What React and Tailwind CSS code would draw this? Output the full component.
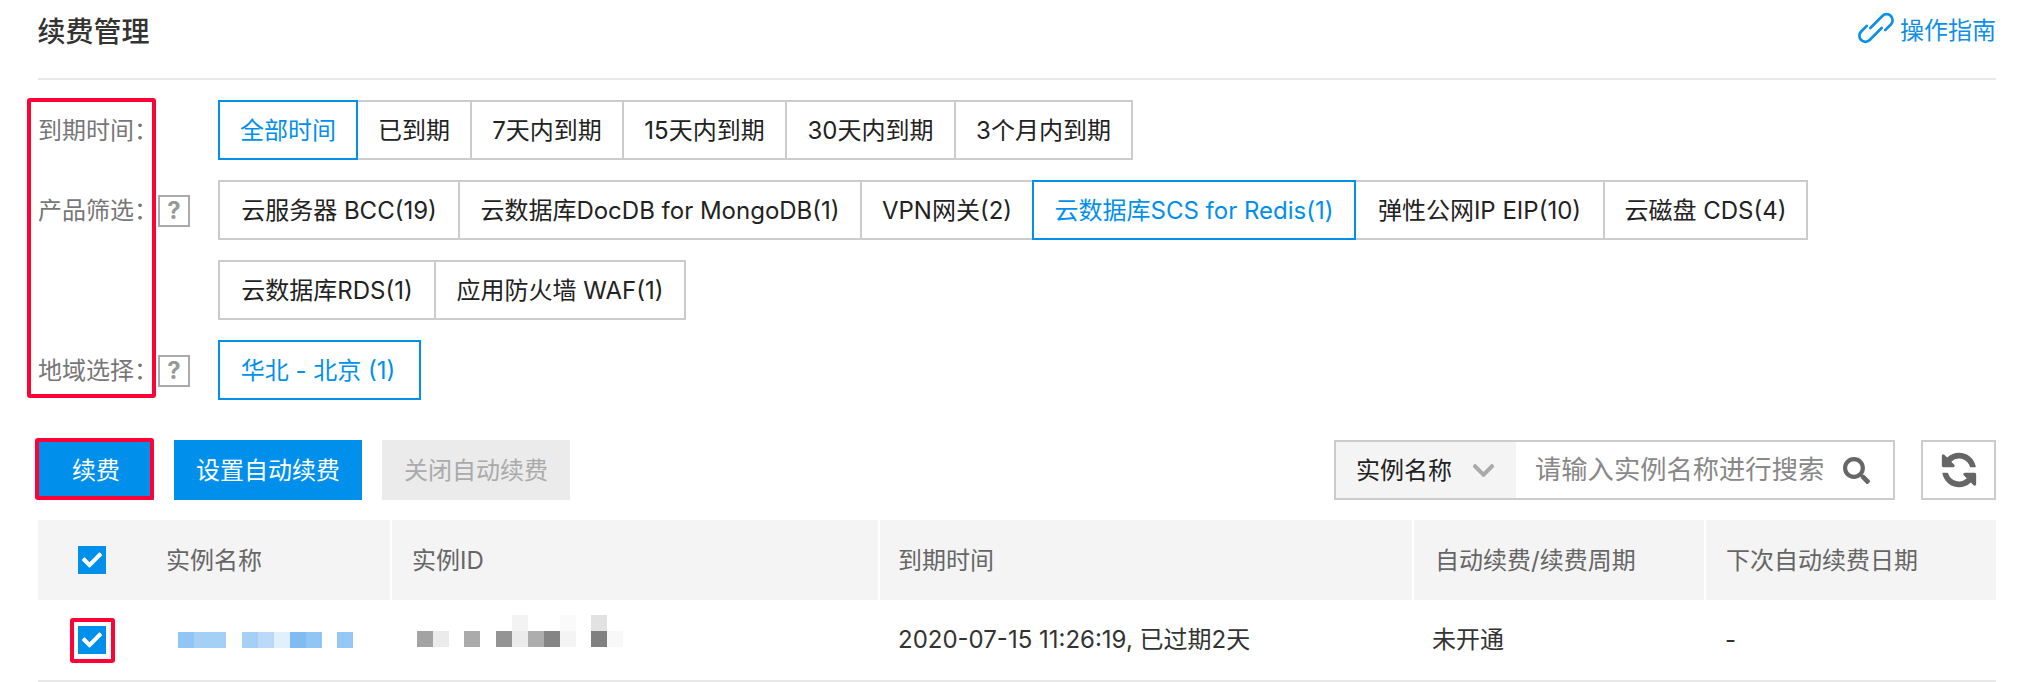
import React from "react";
import { FaSearch, FaChevronDown, FaCheck } from "react-icons/fa";

const Opt = ({ w, active, children }) => (
  <div className={`${w} h-[60px] -ml-[2px] first:ml-0 pt-[2px] flex items-center justify-center whitespace-nowrap border-2 ${active ? "relative z-10 border-[#0090ec] text-[#0090ec]" : "border-[#cccccc] text-[#222222]"}`}>
    {children}
  </div>
);

const Help = () => (
  <div className="w-[32px] h-[32px] ml-[3px] mt-[1px] border-2 border-[#aaaaaa] text-[#999999] text-[24px] font-bold leading-none flex items-center justify-center">?</div>
);

const Label = ({ children, help }) => (
  <div className="w-[180px] h-[60px] shrink-0 flex items-center text-[#777777]">
    <span className="w-[117px] whitespace-nowrap pt-[2px]">{children}</span>
    {help && <Help />}
  </div>
);

const Check = () => (
  <div className="w-[28px] h-[28px] bg-[#0090ec] flex items-center justify-center text-white">
    <FaCheck size={20} />
  </div>
);

const Refresh = () => (
  <svg width="40" height="40" viewBox="0 0 1792 1792" fill="currentColor" className="-scale-x-100">
    <path d="M1639 1056q0 5-1 7-64 268-268 434.5t-478 166.5q-146 0-282.5-55t-243.5-157l-129 129q-19 19-45 19t-45-19-19-45v-448q0-26 19-45t45-19h448q26 0 45 19t19 45-19 45l-137 137q71 66 161 102t187 36q134 0 250-65t186-179q11-17 53-117 8-23 30-23h192q13 0 22.5 9.5t9.5 22.5zm25-800v448q0 26-19 45t-45 19h-448q-26 0-45-19t-19-45 19-45l138-138q-148-137-349-137-134 0-250 65t-186 179q-11 17-53 117-8 23-30 23h-199q-13 0-22.5-9.5t-9.5-22.5v-7q65-268 270-434.5t480-166.5q146 0 284 55.5t245 156.5l130-129q19-19 45-19t45 19 19 45z" />
  </svg>
);

const LinkIcon = () => (
  <svg width="32" height="32" viewBox="0 0 32 32" fill="none" stroke="currentColor" strokeWidth="2.7" strokeLinecap="round" className="mr-[8px] -mt-[2px] overflow-visible">
    <g transform="rotate(-45 16 16)">
      <path d="M11 8 H3 a6 6 0 0 0 0 12 H20" />
      <path d="M12 12 H29 a6 6 0 0 1 0 12 H21" />
    </g>
  </svg>
);

const blue = [[0,"#90c5f5"],[16,"#a4d0f6"],[32,"#a4d0f6"],[64,"#a4d0f6"],[80,"#bbd9f8"],[96,"#e2f0fc"],[112,"#80bcf2"],[128,"#90c5f5"],[159,"#96c8f7"]];
const grey = [[0,16,"#a3a3a3"],[16,16,"#ebebeb"],[47,16,"#ababab"],[79,16,"#949494"],[95,16,"#ebebeb"],[95,0,"#f3f3f3"],[111,16,"#adadad"],[127,16,"#858585"],[143,16,"#f4f4f4"],[143,0,"#fafafa"],[174,16,"#808080"],[174,0,"#e2e2e2"],[190,16,"#f8f8f8"]];

export default function App() {
  return (
    <div className="relative w-[2018px] h-[682px] overflow-hidden bg-white pl-[38px] pr-[22px] text-[24px] leading-[32px] [font-family:'Inter','Noto_Sans_CJK_SC',sans-serif]">
      {/* header */}
      <div className="h-[80px] border-b-2 border-[#e8e8e8] flex justify-between pt-[14px]">
        <div className="text-[28px] leading-[36px] font-medium text-[#333333] -ml-[0.5px]">续费管理</div>
        <div className="flex items-start text-[#0f8fe8]">
          <LinkIcon />
          <span className="pt-[1px]">操作指南</span>
        </div>
      </div>

      {/* filters */}
      <div className="pt-[20px] flex flex-col gap-[20px]">
        <div className="flex">
          <Label>到期时间：</Label>
          <div className="flex">
            <Opt w="w-[140px]" active>全部时间</Opt>
            <Opt w="w-[116px]">已到期</Opt>
            <Opt w="w-[154px]">7天内到期</Opt>
            <Opt w="w-[165px]">15天内到期</Opt>
            <Opt w="w-[171px]">30天内到期</Opt>
            <Opt w="w-[179px]">3个月内到期</Opt>
          </div>
        </div>
        <div className="flex">
          <Label help>产品筛选：</Label>
          <div className="flex">
            <Opt w="w-[242px]">云服务器 BCC(19)</Opt>
            <Opt w="w-[404px]">云数据库DocDB for MongoDB(1)</Opt>
            <Opt w="w-[174px]">VPN网关(2)</Opt>
            <Opt w="w-[324px]" active>云数据库SCS for Redis(1)</Opt>
            <Opt w="w-[251px]">弹性公网IP EIP(10)</Opt>
            <Opt w="w-[205px]">云磁盘 CDS(4)</Opt>
          </div>
        </div>
        <div className="flex">
          <div className="w-[180px] shrink-0" />
          <div className="flex">
            <Opt w="w-[218px]">云数据库RDS(1)</Opt>
            <Opt w="w-[252px]">应用防火墙 WAF(1)</Opt>
          </div>
        </div>
        <div className="flex">
          <Label help>地域选择：</Label>
          <div className="flex">
            <Opt w="w-[203px]" active><span className="mr-[3px]">华北 - 北京 (1)</span></Opt>
          </div>
        </div>
      </div>

      {/* toolbar */}
      <div className="mt-[40px] h-[60px] flex">
        <div className="w-[116px] pt-[2px] bg-[#0090ec] text-white flex items-center justify-center">续费</div>
        <div className="ml-[20px] w-[188px] pt-[2px] bg-[#0090ec] text-white flex items-center justify-center">设置自动续费</div>
        <div className="ml-[20px] w-[188px] pt-[2px] bg-[#ebebeb] text-[#aaaaaa] flex items-center justify-center">关闭自动续费</div>
        <div className="ml-auto w-[561px] border-2 border-[#cccccc] flex">
          <div className="w-[180px] bg-[#f4f4f4] flex items-center pl-[20px] text-[#222222]">
            <span className="whitespace-nowrap pt-[2px]">实例名称</span>
            <FaChevronDown size={25} className="ml-[19px] text-[#aaaaaa]" />
          </div>
          <div className="flex-1 flex items-center pl-[19px] text-[#888888] text-[26.3px]">
            <span className="whitespace-nowrap">请输入实例名称进行搜索</span>
            <FaSearch size={27} className="ml-[19px] text-[#666666]" />
          </div>
        </div>
        <div className="ml-[26px] w-[75px] border-2 border-[#cccccc] flex items-center justify-center text-[#666666]">
          <Refresh />
        </div>
      </div>

      {/* table */}
      <div className="mt-[20px]">
        <div className="h-[80px] flex gap-[2px] text-[#666666]">
          <div className="w-[352px] bg-[#f4f4f4] flex items-center pl-[40px]">
            <Check />
            <span className="ml-[60px] pt-[2px]">实例名称</span>
          </div>
          <div className="w-[486px] bg-[#f4f4f4] flex items-center pl-[20px] pt-[2px]">实例ID</div>
          <div className="w-[532px] bg-[#f4f4f4] flex items-center pl-[18px] pt-[2px]">到期时间</div>
          <div className="w-[290px] bg-[#f4f4f4] flex items-center pl-[21px] pt-[2px]">自动续费/续费周期</div>
          <div className="flex-1 bg-[#f4f4f4] flex items-center pl-[20px] pt-[2px]">下次自动续费日期</div>
        </div>
        <div className="h-[82px] border-b-2 border-[#e8e8e8] flex text-[#333333]">
          <div className="w-[140px] flex items-center pl-[40px]"><Check /></div>
          <div className="w-[239px] flex items-center">
            <svg width="175" height="16" className="blur-[0.4px]">
              {blue.map(([x, c]) => <rect key={x} x={x} y="0" width="16" height="16" fill={c} />)}
            </svg>
          </div>
          <div className="w-[481px] pt-[15px]">
            <svg width="206" height="32" className="blur-[0.4px]">
              {grey.map(([x, y, c], i) => <rect key={i} x={x} y={y} width="16" height="16" fill={c} />)}
            </svg>
          </div>
          <div className="w-[534px] flex items-center whitespace-nowrap">2020-07-15 11:26:19, 已过期2天</div>
          <div className="w-[293px] flex items-center">未开通</div>
          <div className="flex items-center">-</div>
        </div>
      </div>

      {/* annotation boxes */}
      <div className="absolute left-[27px] top-[98px] w-[129px] h-[300px] border-[4px] border-[#ff0037] rounded-[3px]" />
      <div className="absolute left-[35px] top-[438px] w-[119px] h-[62px] border-[4px] border-[#ff0037] rounded-[3px]" />
      <div className="absolute left-[70px] top-[618px] w-[45px] h-[45px] border-[4px] border-[#ff0037] rounded-[3px]" />
    </div>
  );
}
